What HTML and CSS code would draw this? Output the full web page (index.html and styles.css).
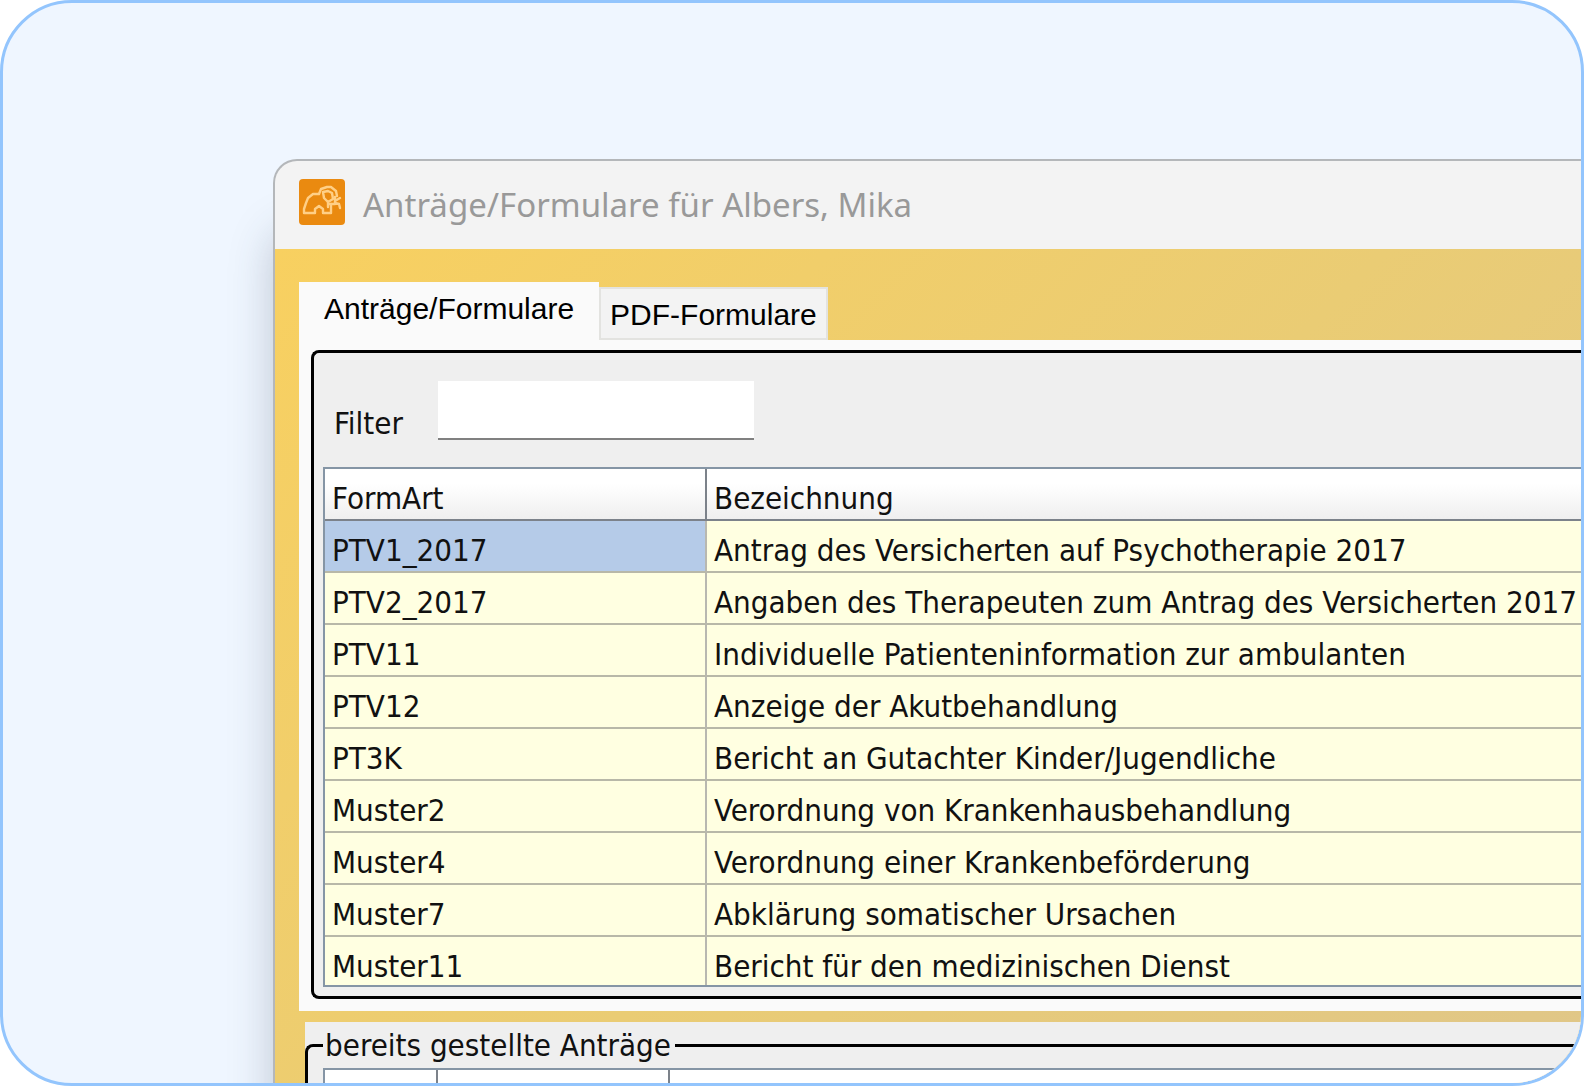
FILE: index.html
```
<!DOCTYPE html>
<html lang="de">
<head>
  <meta charset="UTF-8" />
  <title>Anträge/Formulare</title>
  <link rel="stylesheet" href="styles.css">
</head>
<body>
  <div class="card">
    <div class="window">
      <header class="titlebar">
        <svg class="app-icon" viewBox="0 0 46 46" aria-hidden="true">
          <rect width="46" height="46" rx="4" fill="#ea8a10"/>
          <g fill="none" stroke="#ffcf86" stroke-width="2.4" stroke-linejoin="round" stroke-linecap="round">
            <path d="M20 15h-6l-5 4-2 5-2 6v4h11v-4l4-3 4 3v4h8v-9"/>
            <path d="M20 15l2-5 6-2h4l5 4 1 5"/>
            <path d="M24 13l1 6 4 4 5-3-1-6-4-2z"/>
            <path d="M31 25h5v-7M36 22l5-3M36 24l4 1 1 4M29 23v5"/>
          </g>
        </svg>
        <h1 class="title">Anträge/Formulare für Albers, Mika</h1>
      </header>

      <main class="client">
        <div class="tabs" role="tablist">
          <button class="tab active" role="tab" aria-selected="true">Anträge/Formulare</button>
          <button class="tab" role="tab" aria-selected="false">PDF-Formulare</button>
        </div>

        <section class="tab-page">
          <div class="group">
            <div class="filter">
              <label for="filter">Filter</label>
              <input type="text" id="filter">
            </div>

            <table class="grid">
              <thead>
                <tr><th class="col-art">FormArt</th><th>Bezeichnung</th></tr>
              </thead>
              <tbody>
                <tr><td class="selected">PTV1_2017</td><td>Antrag des Versicherten auf Psychotherapie 2017</td></tr>
                <tr><td>PTV2_2017</td><td>Angaben des Therapeuten zum Antrag des Versicherten 2017</td></tr>
                <tr><td>PTV11</td><td>Individuelle Patienteninformation zur ambulanten</td></tr>
                <tr><td>PTV12</td><td>Anzeige der Akutbehandlung</td></tr>
                <tr><td>PT3K</td><td>Bericht an Gutachter Kinder/Jugendliche</td></tr>
                <tr><td>Muster2</td><td>Verordnung von Krankenhausbehandlung</td></tr>
                <tr><td>Muster4</td><td>Verordnung einer Krankenbeförderung</td></tr>
                <tr><td>Muster7</td><td>Abklärung somatischer Ursachen</td></tr>
                <tr><td>Muster11</td><td>Bericht für den medizinischen Dienst</td></tr>
              </tbody>
            </table>
          </div>
        </section>

        <section class="requests">
          <fieldset>
            <legend>bereits gestellte Anträge</legend>
            <table class="grid">
              <thead>
                <tr><th class="col-mark"></th><th class="col-date"></th><th></th></tr>
              </thead>
            </table>
          </fieldset>
        </section>
      </main>
    </div>
  </div>
</body>
</html>
```
FILE: styles.css
```
* { box-sizing: border-box; margin: 0; padding: 0; }

body {
  background: #fff;
  color: #111;
  font-family: "DejaVu Sans Condensed", "Noto Sans", sans-serif;
  font-size: 31px;
}

.card {
  height: 100vh;
  padding: 156px 0 0 270px;
  overflow: hidden;
  background: #eff6ff;
  border: 3px solid #93c5fd;
  border-radius: 72px;
}

.window {
  background: #f3f3f3;
  border: 2px solid #b4b7ba;
  border-right: none;
  border-top-left-radius: 24px;
  box-shadow: 0 72px 44px rgba(50, 60, 80, 0.26);
}

.titlebar {
  display: flex;
  align-items: flex-start;
  gap: 18px;
  height: 88px;
  padding: 18px 24px 0;
}

.app-icon {
  width: 46px;
  height: 46px;
}

.title {
  color: #999;
  font-family: "Noto Sans", sans-serif;
  font-size: 33px;
  font-weight: 400;
  line-height: 52px;
  white-space: nowrap;
}

.client {
  padding: 33px 0 0 24px;
  background: linear-gradient(135deg, #f8d060, #eacc74 50%, #dfc68a);
}

/* tabs */
.tabs {
  display: flex;
  align-items: flex-end;
}

.tab {
  height: 53px;
  padding: 2px 9px 0;
  background: #f3f3f3;
  border: 2px solid #e3e3e0;
  color: #000;
  font-family: "Liberation Sans", sans-serif;
  font-size: 30px;
  white-space: nowrap;
}

.tab.active {
  height: 58px;
  padding: 0 25px 4px;
  background: #fafafa;
  border: none;
}

.tab-page {
  padding: 10px 0 12px 12px;
  background: #fafafa;
}

.group {
  padding: 28px 0 9px 9px;
  background: #efefef;
  border: 3px solid #000;
  border-right: none;
  border-radius: 8px 0 0 8px;
}

.filter {
  display: flex;
  align-items: flex-end;
  gap: 35px;
  margin-bottom: 27px;
  padding-left: 11px;
}

.filter label {
  line-height: 34px;
}

.filter input {
  width: 316px;
  height: 59px;
  padding: 0 8px;
  background: #fff;
  border: none;
  border-bottom: 2px solid #808080;
  font: inherit;
}

/* data grid */
.grid {
  width: 100%;
  table-layout: fixed;
  border: 2px solid #8595a5;
  border-right: none;
  border-spacing: 0;
}

.grid th,
.grid td {
  height: 52px;
  padding: 11px 0 0 7px;
  border-right: 2px solid #b8b8b0;
  border-bottom: 2px solid #b8b8a8;
  font-weight: 400;
  line-height: 36px;
  text-align: left;
  vertical-align: top;
  white-space: nowrap;
}

.grid th {
  background: linear-gradient(#fff 30%, #efefef);
  border-right-color: #7c828a;
  border-bottom-color: #7c828a;
}

.grid td { background: #ffffe1; }
.grid td.selected { background: #b5cbe8; }

.grid th:last-child,
.grid td:last-child { border-right: none; }

.grid tbody tr:last-child td {
  height: 48px;
  border-bottom: none;
}

.col-art { width: 382px; }
.col-mark { width: 113px; }
.col-date { width: 232px; }

/* second group box */
.requests {
  margin: 11px 0 0 6px;
  padding-top: 4px;
  background: #efefef;
}

.requests fieldset {
  padding: 4px 0 40px 15px;
  border: 3px solid #000;
  border-right: none;
  border-radius: 8px 0 0 8px;
}

.requests legend {
  padding: 0 4px 0 2px;
  line-height: 38px;
}
```
